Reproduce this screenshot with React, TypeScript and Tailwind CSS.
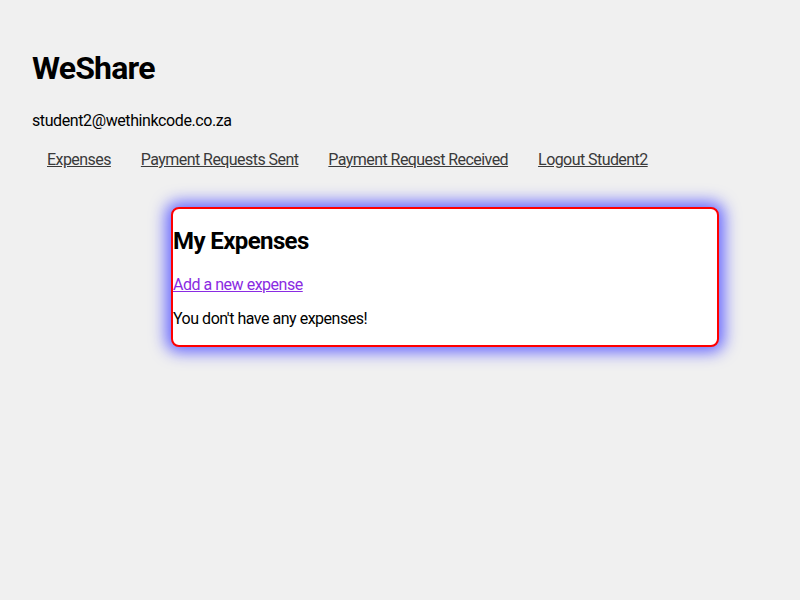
import React from 'react';

const links = ['Expenses', 'Payment Requests Sent', 'Payment Request Received', 'Logout Student2'];

const App: React.FC = () => {
  return (
    <div className="min-h-screen bg-[#f0f0f0] px-8 pt-[48px] text-black font-['Roboto',sans-serif]">
      <h1 className="text-[32px] font-bold leading-[40px] tracking-tight">WeShare</h1>
      <p className="mt-[23px] text-base leading-5 tracking-tight">student2@wethinkcode.co.za</p>
      <ul className="mt-[17px] flex">
        {links.map((l) => (
          <li key={l} className="px-[15px]">
            <a href="#" className="text-base leading-5 text-[#3a3a3a] underline tracking-[-0.035em]">
              {l}
            </a>
          </li>
        ))}
      </ul>
      <div className="mt-[35px] ml-[139px] w-[548px] rounded-lg border-2 border-[#ff0000] bg-white pb-[16px] shadow-[0_0_16px_5px_#6464ff]">
        <h2 className="mt-[16px] text-2xl font-bold leading-8 tracking-tight">My Expenses</h2>
        <a href="#" className="mt-[18px] block text-base leading-5 text-[#8a2be2] underline tracking-[-0.03em]">
          Add a new expense
        </a>
        <p className="mt-[14px] text-base leading-5 tracking-[-0.03em]">You don't have any expenses!</p>
      </div>
    </div>
  );
};

export default App;
